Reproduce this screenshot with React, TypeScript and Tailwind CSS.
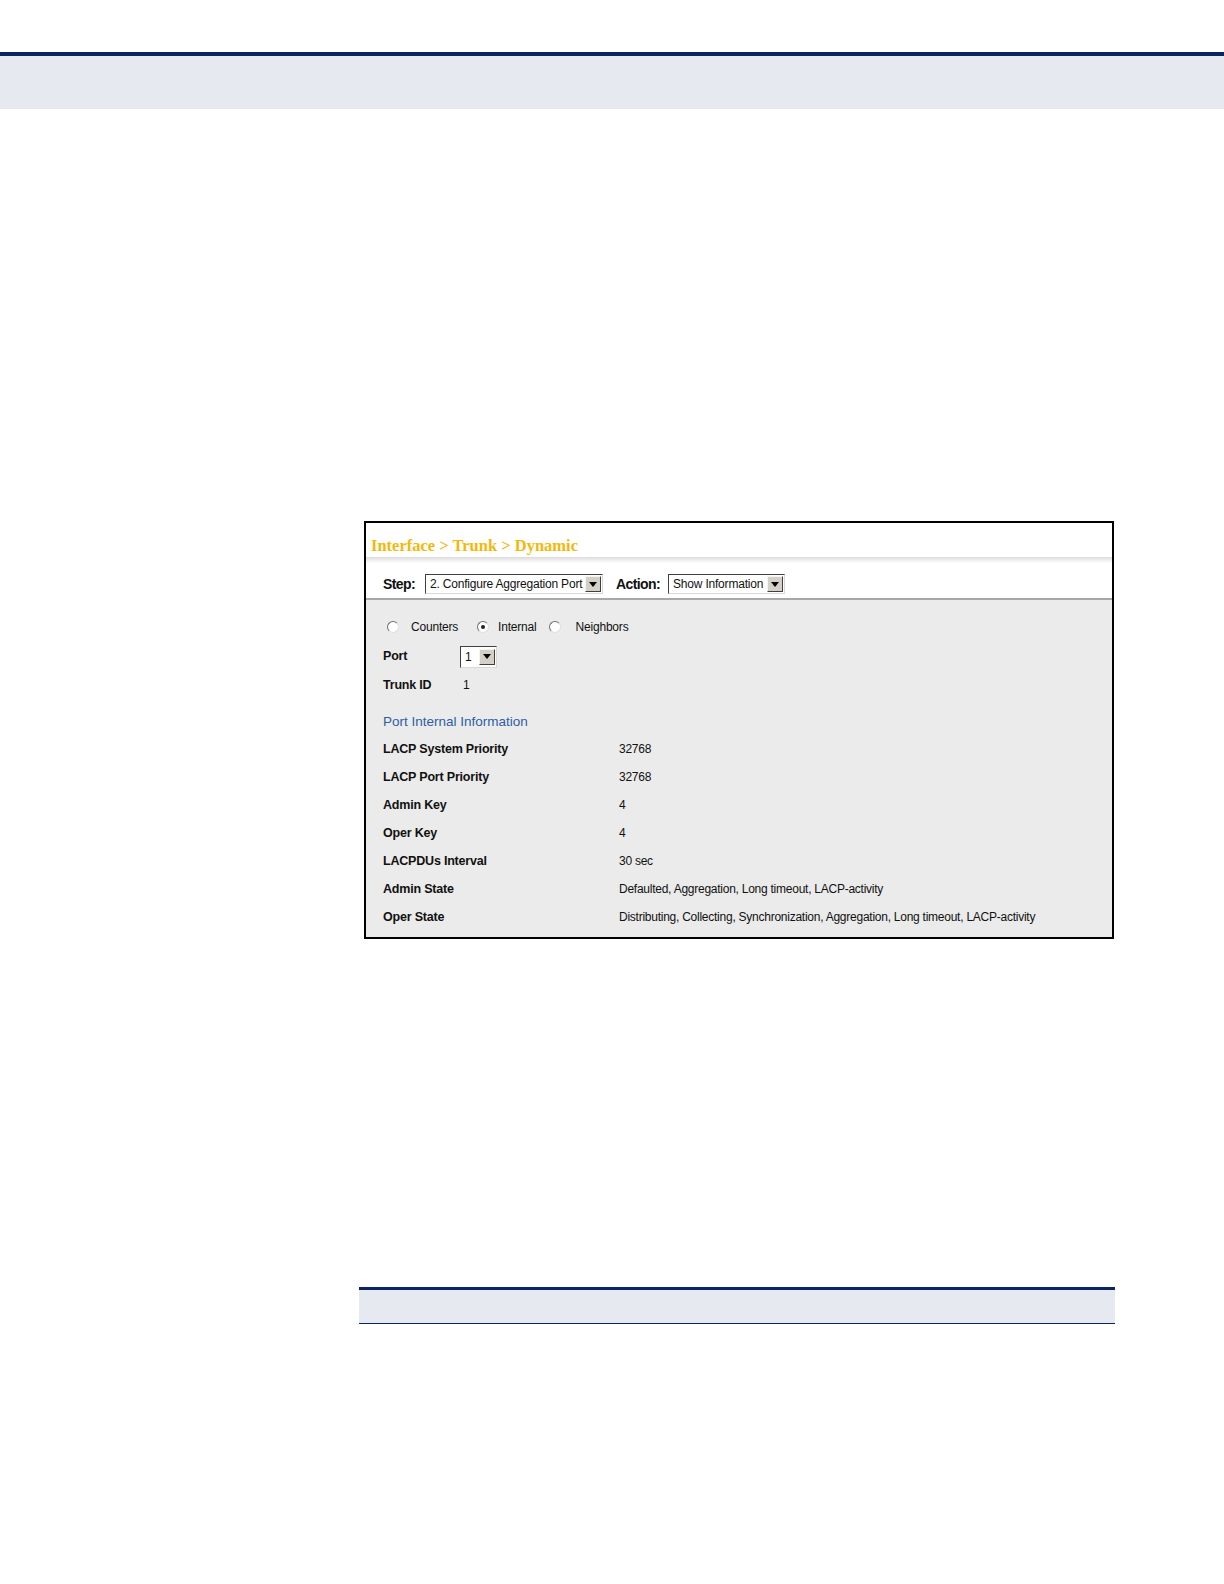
import React from "react";

const sans = { fontFamily: '"Liberation Sans", Arial, sans-serif' };

function Radio({ checked }: { checked?: boolean }) {
  return (
    <span className="flex h-[12px] w-[12px] items-center justify-center rounded-full border border-t-[#6f6f6f] border-l-[#6f6f6f] border-r-[#e0e0e0] border-b-[#e0e0e0] bg-white">
      {checked && <span className="h-[4px] w-[4px] rounded-full bg-[#222]" />}
    </span>
  );
}

function Arrow() {
  return (
    <span className="flex h-[16px] w-[16px] items-center justify-center border border-t-[#f4f4f4] border-l-[#f4f4f4] border-r-[#404040] border-b-[#404040] bg-[#d4d0c8]">
      <svg width="8" height="5" viewBox="0 0 8 5">
        <path d="M0 0 L8 0 L4 5 Z" fill="#000" />
      </svg>
    </span>
  );
}

function Select({ text, width }: { text: string; width: string }) {
  return (
    <span
      className={`flex h-[20px] items-center justify-between border border-t-[#404040] border-l-[#404040] border-r-[#d8d8d8] border-b-[#d8d8d8] bg-white pl-[4px] pr-[1px] ${width}`}
    >
      <span className="whitespace-nowrap text-[12px] tracking-[-0.2px] text-[#111]">{text}</span>
      <Arrow />
    </span>
  );
}

const rows: [string, string][] = [
  ["LACP System Priority", "32768"],
  ["LACP Port Priority", "32768"],
  ["Admin Key", "4"],
  ["Oper Key", "4"],
  ["LACPDUs Interval", "30 sec"],
  ["Admin State", "Defaulted, Aggregation, Long timeout, LACP-activity"],
  ["Oper State", "Distributing, Collecting, Synchronization, Aggregation, Long timeout, LACP-activity"],
];

export default function App() {
  return (
    <div className="relative h-[1584px] w-[1224px] overflow-hidden bg-white" style={sans}>
      {/* top header band */}
      <div className="mt-[52px] h-[4px] w-full bg-[#0b2462]" />
      <div className="h-[53px] w-full bg-[#e6e9f0]" />

      {/* screenshot panel */}
      <div className="ml-[364px] mt-[412px] flex h-[418px] w-[750px] flex-col border-2 border-black bg-white">
        <div className="flex h-[34px] items-end pb-[3px] pl-[5px]">
          <span
            className="text-[16.5px] font-bold leading-none text-[#f5b80a]"
            style={{ fontFamily: '"Liberation Serif", "Times New Roman", serif' }}
          >
            Interface &gt; Trunk &gt; Dynamic
          </span>
        </div>
        <div className="h-[6px] bg-gradient-to-b from-[#dcdcdc] to-white" />
        <div className="flex h-[37px] items-center border-b-2 border-[#a8a8a8] pl-[17px] pt-[7px]">
          <span className="text-[14px] font-bold tracking-[-0.6px] text-[#111]">Step:</span>
          <span className="ml-[10px] flex">
            <Select text="2. Configure Aggregation Port" width="w-[178px]" />
          </span>
          <span className="ml-[13px] text-[14px] font-bold tracking-[-0.6px] text-[#111]">Action:</span>
          <span className="ml-[8px] flex">
            <Select text="Show Information" width="w-[117px]" />
          </span>
        </div>
        <div className="flex flex-1 flex-col bg-[#ebebeb] pl-[17px] text-[#111]">
          <div className="mt-[19px] flex h-[16px] items-center text-[12px] tracking-[-0.2px]">
            <span className="ml-[4px] flex"><Radio /></span>
            <span className="ml-[12px]">Counters</span>
            <span className="ml-[19px] flex"><Radio checked /></span>
            <span className="ml-[9px]">Internal</span>
            <span className="ml-[12px] flex"><Radio /></span>
            <span className="ml-[15px]">Neighbors</span>
          </div>
          <div className="mt-[10px] flex h-[23px] items-center">
            <span className="w-[77px] text-[12.5px] font-bold tracking-[-0.2px]">Port</span>
            <span className="flex h-[22px] w-[37px] items-center justify-between border border-t-[#404040] border-l-[#404040] border-r-[#d8d8d8] border-b-[#d8d8d8] bg-white pl-[4px] pr-[1px]">
              <span className="text-[12px]">1</span>
              <Arrow />
            </span>
          </div>
          <div className="mt-[6px] flex h-[22px] items-center">
            <span className="w-[80px] text-[12.5px] font-bold tracking-[-0.2px]">Trunk ID</span>
            <span className="text-[12px]">1</span>
          </div>
          <div className="mt-[17px] flex h-[18px] items-center text-[13.5px] text-[#2d5da6]">
            Port Internal Information
          </div>
          <div className="mt-[4px] flex flex-col">
            {rows.map(([k, v]) => (
              <div key={k} className="flex h-[28px] items-center">
                <span className="w-[236px] text-[12.5px] font-bold tracking-[-0.2px]">{k}</span>
                <span className="whitespace-nowrap text-[12px] tracking-[-0.25px]">{v}</span>
              </div>
            ))}
          </div>
        </div>
      </div>

      {/* bottom table header */}
      <div className="ml-[359px] mt-[348px] w-[756px]">
        <div className="h-[3px] bg-[#0b2462]" />
        <div className="h-[34px] border-b border-[#0b2462] bg-[#e6e9f0]" />
      </div>
    </div>
  );
}
